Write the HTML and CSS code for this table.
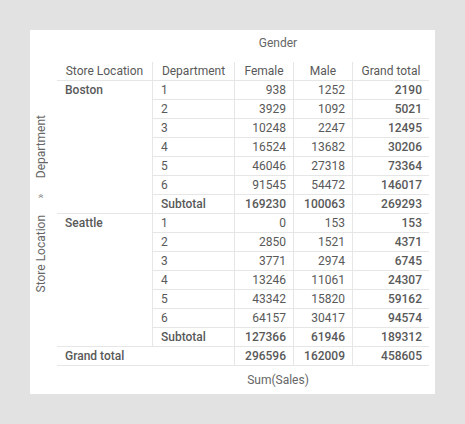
FILE: index.html
```html
<!DOCTYPE html>
<html>
<head>
<meta charset="utf-8">
<link rel="stylesheet" href="styles.css">
</head>
<body>
<div class="panel">
  <div class="col-title">Gender</div>
  <div class="axis-label">
    <div class="axis-text"><span>Store Location</span><span class="sep">»</span><span>Department</span></div>
  </div>
  <div class="pivot">
    <div class="c h first">Store Location</div>
    <div class="c h">Department</div>
    <div class="c h">Female</div>
    <div class="c h">Male</div>
    <div class="c h">Grand total</div>

    <div class="c first grp boston">Boston</div>
    <div class="c">1</div><div class="c n">938</div><div class="c n">1252</div><div class="c n b">2190</div>
    <div class="c">2</div><div class="c n">3929</div><div class="c n">1092</div><div class="c n b">5021</div>
    <div class="c">3</div><div class="c n">10248</div><div class="c n">2247</div><div class="c n b">12495</div>
    <div class="c">4</div><div class="c n">16524</div><div class="c n">13682</div><div class="c n b">30206</div>
    <div class="c">5</div><div class="c n">46046</div><div class="c n">27318</div><div class="c n b">73364</div>
    <div class="c">6</div><div class="c n">91545</div><div class="c n">54472</div><div class="c n b">146017</div>
    <div class="c b">Subtotal</div><div class="c n b">169230</div><div class="c n b">100063</div><div class="c n b">269293</div>

    <div class="c first grp">Seattle</div>
    <div class="c">1</div><div class="c n">0</div><div class="c n">153</div><div class="c n b">153</div>
    <div class="c">2</div><div class="c n">2850</div><div class="c n">1521</div><div class="c n b">4371</div>
    <div class="c">3</div><div class="c n">3771</div><div class="c n">2974</div><div class="c n b">6745</div>
    <div class="c">4</div><div class="c n">13246</div><div class="c n">11061</div><div class="c n b">24307</div>
    <div class="c">5</div><div class="c n">43342</div><div class="c n">15820</div><div class="c n b">59162</div>
    <div class="c">6</div><div class="c n">64157</div><div class="c n">30417</div><div class="c n b">94574</div>
    <div class="c b">Subtotal</div><div class="c n b">127366</div><div class="c n b">61946</div><div class="c n b">189312</div>

    <div class="c first b total">Grand total</div>
    <div class="c n b">296596</div><div class="c n b">162009</div><div class="c n b">458605</div>
  </div>
  <div class="value-title">Sum(Sales)</div>
</div>
</body>
</html>
```

FILE: styles.css
```css
html, body {
  margin: 0;
  padding: 0;
}
body {
  background: #e2e2e2;
  width: 465px;
  height: 424px;
  font-family: Roboto, "Liberation Sans", sans-serif;
  font-size: 12px;
  color: #595959;
}
.panel {
  margin: 30px 0 0 30px;
  width: 405px;
  height: 364px;
  background: #ffffff;
  display: grid;
  grid-template-columns: 27px 1fr;
  grid-template-rows: 32px auto 1fr;
}
.col-title,
.value-title {
  grid-column: 2;
  text-align: center;
  padding-left: 64px;
  line-height: 18px;
  color: #666666;
}
.col-title {
  grid-row: 1;
  padding-top: 4px;
}
.value-title {
  grid-row: 3;
  padding-top: 5px;
}
.axis-label {
  grid-column: 1;
  grid-row: 2;
  display: flex;
  align-items: center;
  justify-content: center;
  padding: 0 5px 21px 0;
}
.axis-text {
  writing-mode: vertical-rl;
  transform: rotate(180deg);
  line-height: 18px;
  color: #666666;
  white-space: nowrap;
}
.sep {
  font-size: 10px;
  margin: 16px 0;
  color: #8a8a8a;
}
.pivot {
  grid-column: 2;
  grid-row: 2;
  display: grid;
  grid-template-columns: 95px 82px 59px 59px 77px;
  grid-auto-rows: 19px;
  align-self: start;
}
.c {
  box-sizing: border-box;
  border-bottom: 1px solid #e6e6e6;
  border-left: 1px solid #e6e6e6;
  line-height: 18px;
  padding: 0 7px 0 8px;
  white-space: nowrap;
}
.c.first {
  border-left: none;
}
.h {
  text-align: center;
  padding: 0 4px;
}
.grp {
  grid-row: span 7;
  font-weight: 500;
}
.total {
  grid-column: span 2;
}
.n {
  text-align: right;
}
.b {
  font-weight: 500;
}
```
